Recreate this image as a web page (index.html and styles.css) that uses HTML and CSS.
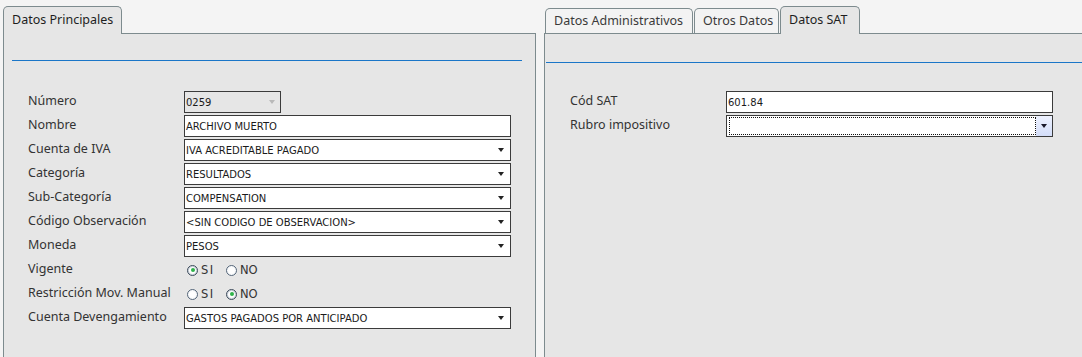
FILE: index.html
```html
<!DOCTYPE html>
<html lang="es">
<head>
<meta charset="utf-8">
<title>Cuenta</title>
<link rel="stylesheet" href="styles.css">
</head>
<body>
<div class="page">
  <section class="panel panel-left">
    <div class="tabs">
      <div class="tab active tab-principal">Datos Principales</div>
    </div>
    <div class="body">
      <div class="rule rule-left"></div>
      <div class="form form-left">
        <div class="lbl">Número</div>
        <div class="field combo disabled short"><span class="val">0259</span><i class="arrow"></i></div>

        <div class="lbl">Nombre</div>
        <div class="field"><span class="val">ARCHIVO MUERTO</span></div>

        <div class="lbl">Cuenta de IVA</div>
        <div class="field combo"><span class="val">IVA ACREDITABLE PAGADO</span><i class="arrow"></i></div>

        <div class="lbl">Categoría</div>
        <div class="field combo"><span class="val">RESULTADOS</span><i class="arrow"></i></div>

        <div class="lbl">Sub-Categoría</div>
        <div class="field combo"><span class="val">COMPENSATION</span><i class="arrow"></i></div>

        <div class="lbl">Código Observación</div>
        <div class="field combo"><span class="val">&lt;SIN CODIGO DE OBSERVACION&gt;</span><i class="arrow"></i></div>

        <div class="lbl">Moneda</div>
        <div class="field combo"><span class="val">PESOS</span><i class="arrow"></i></div>

        <div class="lbl">Vigente</div>
        <div class="radios">
          <span class="radio checked"></span><span class="rtext rtext-si">SI</span>
          <span class="radio"></span><span class="rtext">NO</span>
        </div>

        <div class="lbl">Restricción Mov. Manual</div>
        <div class="radios">
          <span class="radio"></span><span class="rtext rtext-si">SI</span>
          <span class="radio checked"></span><span class="rtext">NO</span>
        </div>

        <div class="lbl">Cuenta Devengamiento</div>
        <div class="field combo"><span class="val">GASTOS PAGADOS POR ANTICIPADO</span><i class="arrow"></i></div>
      </div>
    </div>
  </section>

  <section class="panel panel-right">
    <div class="tabs tabs-right">
      <div class="tab tab-admin">Datos Administrativos</div>
      <div class="tab tab-otros">Otros Datos</div>
      <div class="tab active tab-sat">Datos SAT</div>
    </div>
    <div class="body body-right">
      <div class="rule rule-right"></div>
      <div class="form form-right">
        <div class="lbl">Cód SAT</div>
        <div class="field"><span class="val">601.84</span></div>

        <div class="lbl">Rubro impositivo</div>
        <div class="field combo focus"><span class="focusbox"></span><span class="btn"><i class="arrow"></i></span></div>
      </div>
    </div>
  </section>
</div>
</body>
</html>
```

FILE: styles.css
```css
html, body {
  margin: 0;
  padding: 0;
  background: #f4f4f4;
  overflow: hidden;
}

.page {
  display: flex;
  gap: 8px;
  padding: 6px 0 0 3px;
  height: 357px;
  box-sizing: border-box;
  width: 1082px;
  font-family: "Noto Sans", "Open Sans", sans-serif;
}

.panel {
  display: flex;
  flex-direction: column;
  height: 351px;
}

.panel-left {
  width: 533px;
}

.panel-right {
  flex: 1;
}

.tabs {
  display: flex;
  align-items: flex-end;
  height: 28px;
  box-sizing: border-box;
  border-bottom: 1px solid #7d8b8e;
}

.tabs-right {
  padding-left: 1px;
}

.tab {
  box-sizing: border-box;
  height: 25px;
  border: 1px solid #7d8b8e;
  border-bottom: none;
  border-radius: 5px 5px 0 0;
  background: #f3f3f3;
  color: #3a3a3a;
  font-size: 12.5px;
  line-height: 1;
  padding: 6px 0 0 8px;
  white-space: nowrap;
}

.tab.active {
  height: 28px;
  margin-bottom: -1px;
  background: #e6e6e6;
  color: #1e1e1e;
  padding-top: 7px;
}

.tab-principal { width: 119px; }
.tab-admin { width: 148px; margin-right: 1px; }
.tab-otros { width: 85px; margin-right: 1px; }
.tab-sat { width: 80px; }

.body {
  flex: 1;
  background: #e6e6e6;
  border-left: 1px solid #7d8b8e;
  border-right: 1px solid #7d8b8e;
  display: flex;
  flex-direction: column;
}

.body-right {
  border-right: none;
}

.rule {
  height: 1px;
  background: #1b76c8;
}

.rule-left {
  margin: 26px 13px 0 8px;
}

.rule-right {
  margin: 28px 0 0 1px;
}

.form {
  display: grid;
  grid-template-columns: 156px 327px;
  grid-auto-rows: 22px;
  row-gap: 2px;
  align-items: center;
}

.form-left {
  margin-top: 30px;
  padding-left: 24px;
}

.form-right {
  margin-top: 28px;
  padding-left: 25px;
}

.lbl {
  font-size: 12.5px;
  color: #333;
  white-space: nowrap;
  line-height: 1;
  padding-bottom: 1px;
}

.field {
  box-sizing: border-box;
  height: 22px;
  border: 1px solid #3b3b3b;
  background: #fff;
  display: flex;
  align-items: center;
  padding-left: 1px;
  font-family: "DejaVu Sans", Verdana, sans-serif;
  font-size: 10px;
  color: #1a1a1a;
}

.field .val {
  flex: 1;
  white-space: nowrap;
}

.field.short {
  width: 97px;
}

.field.disabled {
  background: #e6e6e6;
}

.arrow {
  display: block;
  width: 0;
  height: 0;
  border-left: 3.5px solid transparent;
  border-right: 3.5px solid transparent;
  border-top: 4px solid #222;
  margin-right: 6px;
}

.field.disabled .arrow {
  border-top-color: #b9b9b9;
  margin-right: 5px;
}

.field.focus {
  padding: 1px 0 1px 2px;
}

.focusbox {
  flex: 1;
  align-self: stretch;
  border: 1px dotted #111;
}

.btn {
  width: 16px;
  align-self: stretch;
  margin: -1px 0;
  background: linear-gradient(#eef2ff, #d3ddf8);
  display: flex;
  align-items: center;
  justify-content: center;
}

.btn .arrow {
  margin: 0;
  border-top-color: #1a1a2a;
}

.radios {
  display: flex;
  align-items: center;
  height: 22px;
  font-family: "DejaVu Sans", Verdana, sans-serif;
  font-size: 11.5px;
  color: #333;
}

.radio {
  box-sizing: border-box;
  width: 11px;
  height: 11px;
  border-radius: 50%;
  border: 1px solid #55667a;
  background: radial-gradient(circle, #ffffff 40%, #e8ecf0 100%);
  margin-left: 3px;
  display: flex;
  align-items: center;
  justify-content: center;
}

.radio.checked {
  border-color: #3d4b5c;
  box-shadow: inset 0 0 0 1px #c8d0d8;
}

.radio.checked::after {
  content: "";
  width: 4px;
  height: 4px;
  border-radius: 50%;
  background: #2fb24a;
}

.rtext {
  margin-left: 3px;
  letter-spacing: 0;
}

.rtext-si {
  width: 22px;
  letter-spacing: 1.5px;
}
```
